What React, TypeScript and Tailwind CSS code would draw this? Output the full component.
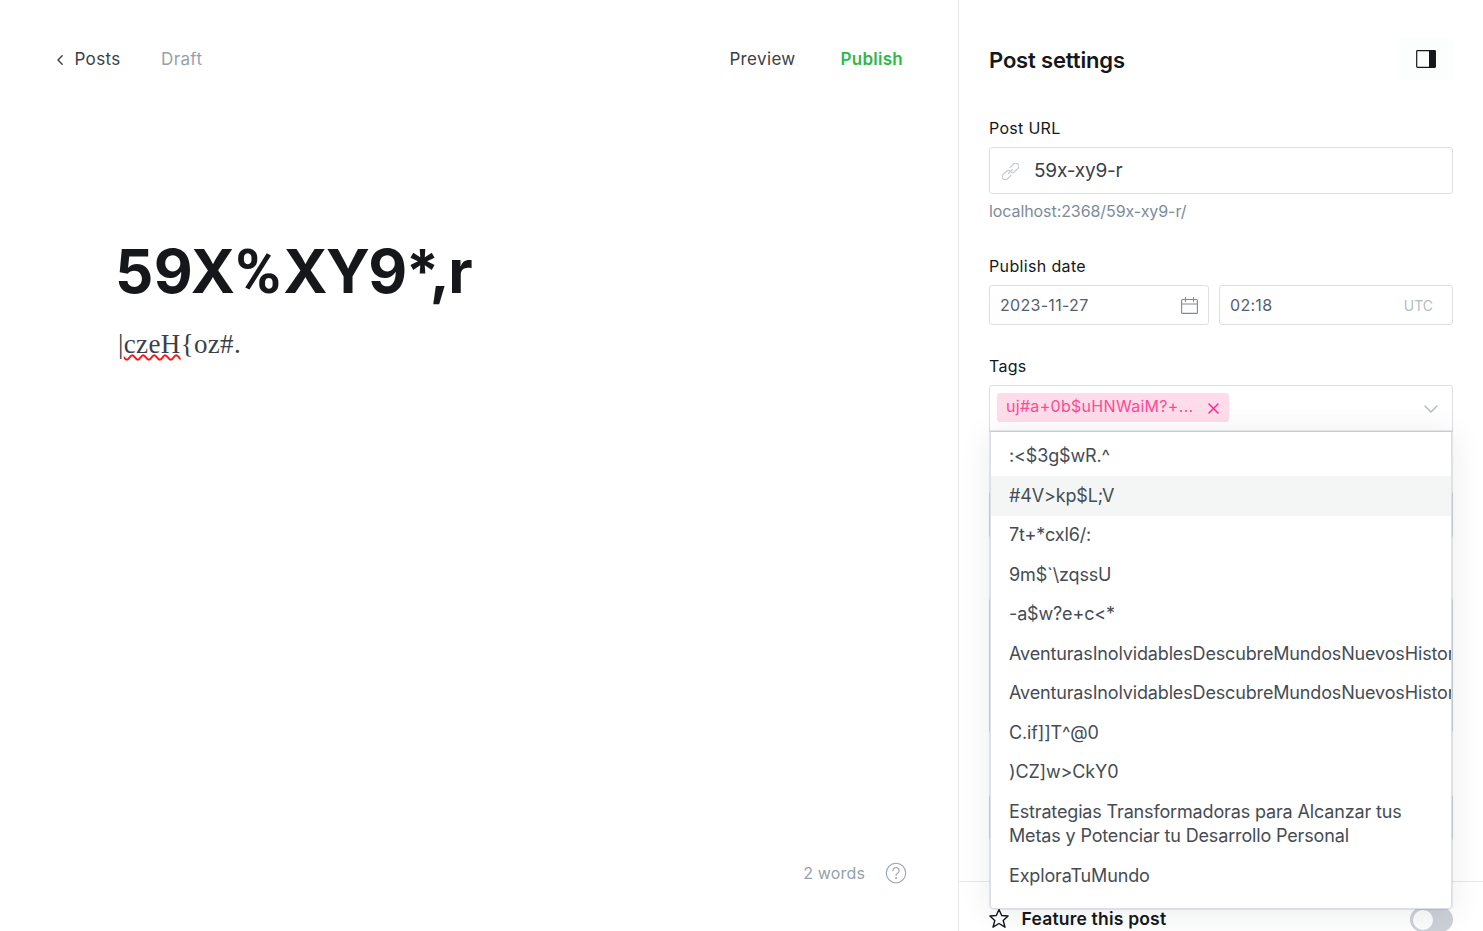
const tags = [
  ':<$3g$wR.^',
  '#4V>kp$L;V',
  '7t+*cxl6/:',
  '9m$`\\zqssU',
  '-a$w?e+c<*',
  'AventurasInolvidablesDescubreMundosNuevosHistoriasFascinantes',
  'AventurasInolvidablesDescubreMundosNuevosHistoriasFascinantes',
  'C.if]]T^@0',
  ')CZ]w>CkY0',
  'Estrategias Transformadoras para Alcanzar tus Metas y Potenciar tu Desarrollo Personal',
  'ExploraTuMundo',
];

function Editor() {
  return (
    <main className="flex h-full w-[958px] shrink-0 flex-col">
      <header className="flex h-[118px] items-center pl-[55px] pr-[55px] text-[17px] leading-6 tracking-[0.35px] text-[#394047]">
        <button className="flex items-center">
          <svg className="mr-[9.500px]" width="10" height="12" viewBox="0 0 10 12" fill="none" stroke="currentColor" strokeWidth="1.4" strokeLinecap="round" strokeLinejoin="round">
            <path d="M7.2 2.8 3 7l4.200 4.200" />
          </svg>
          Posts
        </button>
        <span className="ml-[40.500px] text-[#95a1ad]">Draft</span>
        <button className="ml-auto">Preview</button>
        <button className="ml-[45px] font-semibold tracking-[0.25px] text-[#30b847]">Publish</button>
      </header>
      <section className="flex-1 pl-[115px] pt-[118px]">
        <h1 className="h-[70px] text-[60px] font-bold leading-[70px] text-[#15171a]">
          <span className="tracking-[0.3px]">59X</span>
          <span className="mr-[2px] font-['Roboto',sans-serif] text-[62px]">%</span>
          <span className="tracking-[-1.5px]">XY9*,r</span>
        </h1>
        <p className="ml-[3px] mt-5 font-['Liberation_Serif',serif] text-[27px] leading-9 tracking-[0.35px] text-[#394047]">
          |
          <span className="underline decoration-[#ff1010] decoration-wavy decoration-[1.500px] underline-offset-[1px]">czeH</span>
          {'{oz#.'}
        </p>
      </section>
      <footer className="flex h-[116px] items-center justify-end gap-5 pr-[51px] text-[16px] tracking-[0.15px] text-[#95a1ad]">
        2 words
        <svg width="22" height="22" viewBox="0 0 22 22" fill="none" stroke="currentColor" strokeWidth="1.100" strokeLinecap="round">
          <circle cx="11" cy="11" r="9.700" />
          <path d="M7.900 8.700a3.100 3.100 0 1 1 4.700 2.600c-1.100.6-1.600 1.100-1.600 2.100" />
          <circle cx="11" cy="16" r=".4" fill="currentColor" />
        </svg>
      </footer>
    </main>
  );
}

function TagMenu() {
  return (
    <div className="absolute left-px top-[46px] h-[478px] w-[462px] rounded-b-[4px] shadow-[0_0_0_1px_rgba(70,80,110,0.12),0_4px_32px_rgba(20,30,45,0.09)]">
      <div className="h-full overflow-hidden rounded-b-[4px] border border-[#dddfe4] border-t-[#c8ccd0] bg-white pt-[4.500px]">
        <ul className="text-[18px] leading-[24.5px] tracking-[-0.15px] text-[#454c54]">
          {tags.map((tag, i) => (
            <li key={i} className={i === 1 ? 'bg-[#f4f6f6] px-[18px] py-[7.500px]' : 'px-[18px] py-[7.500px]'}>
              {tag}
            </li>
          ))}
        </ul>
      </div>
    </div>
  );
}

function Settings() {
  return (
    <aside className="h-full flex-1 border-l border-[#e5e8ea] px-[30px] text-[16px] text-[#15171a]">
      <div className="flex h-[118px] items-center justify-between">
        <h2 className="pt-px text-[22px] font-semibold leading-7 tracking-[-0.15px]">Post settings</h2>
        <button className="flex h-[42px] w-[54px] items-center justify-center rounded-[4px] bg-[#fcfdfd]">
          <svg width="20" height="18" viewBox="0 0 20 18" fill="none">
            <rect x=".7" y=".7" width="18.600" height="16.600" rx=".8" stroke="#15171a" strokeWidth="1.200" />
            <path d="M13 .5h6q.7 0 .7.7v15.600q0 .7-.7.7h-6z" fill="#15171a" />
          </svg>
        </button>
      </div>

      <label className="block h-[29px] leading-5 tracking-[0.3px]">Post URL</label>
      <div className="flex h-[47px] items-center rounded-[3px] border border-[#dddfe1] pl-3 text-[19px] tracking-[-0.2px] text-[#394047]">
        <svg className="mr-[15px] mt-px" width="17" height="17" viewBox="0 0 24 24" fill="none" stroke="#c5c9ce" strokeWidth="1.700" strokeLinecap="round">
          <g transform="rotate(-45 12 12)">
            <path d="M8.500 16.300H1.500a4.300 4.300 0 0 1 0-8.600h6.500a4.300 4.300 0 0 1 4 2.700" />
            <path d="M15.500 7.700h7a4.300 4.300 0 0 1 0 8.600h-6.500a4.300 4.300 0 0 1-4-2.700" />
            <path d="M8 12h8" />
          </g>
        </svg>
        <span className="pt-[2px]">59x-xy9-r</span>
      </div>
      <p className="mt-[6px] leading-[22px] tracking-[-0.08px] text-[#7c8b9a]">localhost:2368/59x-xy9-r/</p>

      <label className="mt-[32px] block h-[31px] leading-6 tracking-[0.35px]">Publish date</label>
      <div className="flex h-10 gap-[10px] text-[16px] tracking-[0.3px] text-[#54606c]">
        <div className="flex w-[220px] items-center justify-between rounded-[3px] border border-[#dddfe1] px-[10px]">
          2023-11-27
          <svg width="17" height="17" viewBox="0 0 17 17" fill="none" stroke="#7c8b9a" strokeWidth="1.100" strokeLinecap="round">
            <rect x=".6" y="2.500" width="15.800" height="13.900" rx="1" />
            <path d="M.6 7h15.800M4.500.6v4M12.500.6v4" />
          </svg>
        </div>
        <div className="flex flex-1 items-center justify-between rounded-[3px] border border-[#dddfe1] pl-[10px] pr-[19px]">
          02:18
          <span className="text-[14px] tracking-[0px] text-[#b5bcc4]">UTC</span>
        </div>
      </div>

      <label className="mt-[29px] block h-[31px] leading-6 tracking-[0.3px]">Tags</label>
      <div className="relative h-[496px]">
        <div className="flex h-[47px] items-center justify-between rounded-t-[3px] border border-[#dddfe1] pl-[7px] pr-[14px]">
          <span className="mb-[2px] flex h-[29px] w-[232px] items-center justify-between rounded-[3px] bg-[#ffdcea] pl-[9px] pr-[10px] text-[16px] tracking-[0.3px] text-[#fb4b94]">
            <span className="pb-[3px]">uj#a+0b$uHNWaiM?+...</span>
            <svg className="mt-px" width="11" height="11" viewBox="0 0 11 11" stroke="#fb2d8d" strokeWidth="1.500" strokeLinecap="round">
              <path d="m1 1 9 9M10 1 1 10" />
            </svg>
          </span>
          <svg width="14" height="8" viewBox="0 0 14 8" fill="none" stroke="#abb4be" strokeWidth="1.200" strokeLinecap="round" strokeLinejoin="round">
            <path d="m1 1 6 6 6-6" />
          </svg>
        </div>
        <div className="mt-[59px] h-[47px] rounded-[3px] border border-[#dddfe1]" />
        <div className="mt-[60px] h-[135px] rounded-[3px] border border-[#dddfe1]" />
        <div className="mt-[61px] h-[47px] rounded-[3px] border border-[#dddfe1]" />
        <TagMenu />
      </div>
      <div className="-mx-[30px] flex h-[50px] items-start border-t border-[#e5e8ea] px-[30px] pt-[26px]">
        <svg width="20" height="21" viewBox="0 0 20 21" fill="none" stroke="#15171a" strokeWidth="1.400" strokeLinejoin="round">
          <path d="m10 1.500 2.700 6 6.400.5-4.900 4.500 1.800 6.700-6-3.700-6 3.700 1.800-6.700L.9 8l6.400-.5z" />
        </svg>
        <span className="ml-[12.500px] text-[17.500px] font-semibold leading-[22px] tracking-[0.2px]">Feature this post</span>
        <span className="-mt-px ml-auto flex h-[25px] w-[43px] items-center rounded-full bg-[#ccd1d8] pl-[3px]">
          <span className="h-5 w-5 rounded-full bg-[#fcfdfd]" />
        </span>
      </div>
    </aside>
  );
}

export default function App() {
  return (
    <div className="flex h-[931px] w-[1483px] overflow-hidden bg-white font-['Inter',sans-serif]">
      <Editor />
      <Settings />
    </div>
  );
}
